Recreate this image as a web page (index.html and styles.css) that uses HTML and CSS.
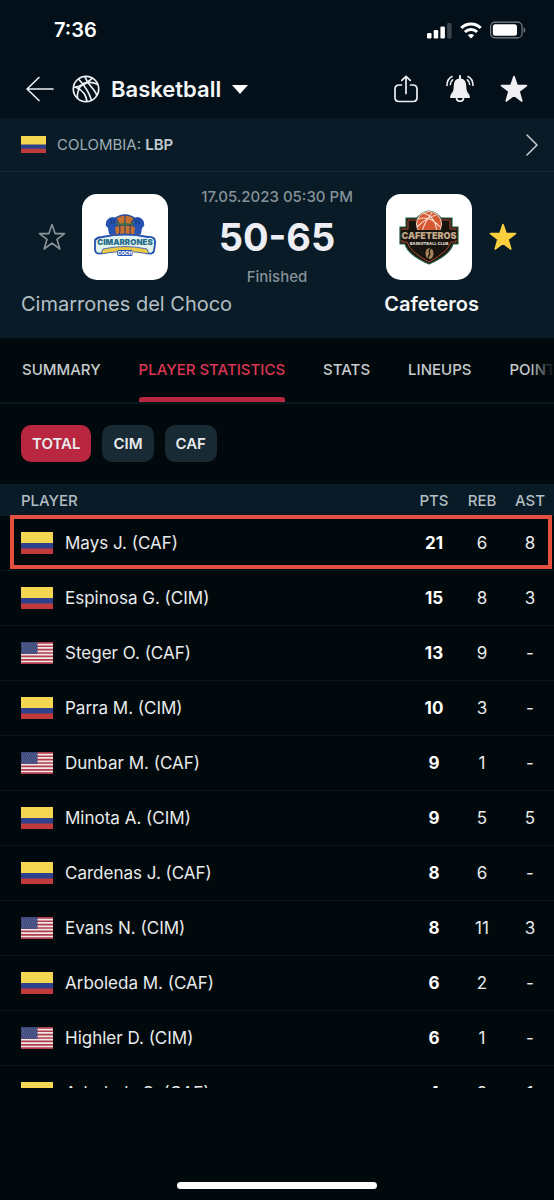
FILE: index.html
```
<!DOCTYPE html>
<html lang="en">
<head>
  <meta charset="utf-8">
  <meta name="viewport" content="width=device-width, initial-scale=1">
  <title>Cimarrones del Choco - Cafeteros</title>
  <link rel="stylesheet" href="styles.css">
</head>
<body>
<svg class="defs" aria-hidden="true">
  <symbol id="col" viewBox="0 0 32 22" preserveAspectRatio="none">
    <rect width="32" height="22" fill="#f5d653"/>
    <rect y="11" width="32" height="6" fill="#2d418c"/>
    <rect y="16.5" width="32" height="5.5" fill="#c13a3c"/>
  </symbol>
  <symbol id="usa" viewBox="0 0 32 22" preserveAspectRatio="none">
    <rect width="32" height="22" fill="#f1e6e8"/>
    <path d="M0 .85h32M0 4.25h32M0 7.6h32M0 11h32M0 14.4h32M0 17.8h32M0 21.15h32" stroke="#b03d4b" stroke-width="1.7"/>
    <rect width="16.5" height="11.8" fill="#3b4678"/>
    <path d="M1 2h15M2 4h14M1 6h15M2 8h14M1 10h15" stroke="#8d95b8" stroke-width=".8" stroke-dasharray="1 1.4"/>
  </symbol>
  <symbol id="star" viewBox="0 0 28 28">
    <path d="M14 1.500l3.100 9.100h9.400l-7.500 5.700 2.800 9.700-7.800-5.800L6.200 26 9 16.300 1.500 10.600h9.400z" stroke-width="1.600" stroke-linejoin="round"/>
  </symbol>
</svg>

<div class="status">
  <span class="time">7:36</span>
  <svg width="25" height="17" viewBox="0 0 25 17" fill="#fff">
    <rect y="11" width="4.500" height="5.500" rx="1.200"/>
    <rect x="6.700" y="8" width="4.500" height="8.500" rx="1.200"/>
    <rect x="13.400" y="4.500" width="4.500" height="12" rx="1.200"/>
    <rect x="20.100" y="1" width="4.500" height="15.500" rx="1.200" opacity=".22"/>
  </svg>
  <svg width="22" height="17" viewBox="0 0 22 17" fill="none" stroke="#fff" stroke-width="3">
    <path d="M1.300 6a13.800 13.800 0 0 1 19.400 0"/>
    <path d="M4.900 10a8.700 8.700 0 0 1 12.200 0"/>
    <path d="M11 16.500l-3.200-3.300a4.600 4.600 0 0 1 6.400 0z" fill="#fff" stroke="none"/>
  </svg>
  <svg width="36" height="18" viewBox="0 0 36 18">
    <rect x=".6" y="1.100" width="31.500" height="15.800" rx="4.500" fill="none" stroke="#fff" stroke-width="1.100" opacity=".5"/>
    <rect x="2.800" y="3.300" width="24.200" height="11.400" rx="2.500" fill="#fff"/>
    <path d="M33.700 6.500c2 .6 2 4.400 0 5z" fill="#fff" opacity=".5"/>
  </svg>
</div>

<header class="header">
  <button type="button" class="icon" aria-label="Back">
    <svg width="28" height="28" viewBox="0 0 28 28" fill="none" stroke="#eef1f3" stroke-width="1.600" stroke-linecap="round" stroke-linejoin="round">
      <path d="M27 14H1M13 2.500L1 14l12 11.500"/>
    </svg>
  </button>
  <button type="button" class="sport">
    <svg width="28" height="28" viewBox="0 0 28 28" fill="none" stroke="#eef1f3" stroke-width="1.700">
      <circle cx="14" cy="14" r="12.700"/>
      <path d="M1.500 12.500C7 12 13 9.500 17 6c2-1.800 3-2.800 3.600-3.600"/>
      <path d="M11 8.500c5-1.700 10.500-1.300 14.800.9"/>
      <path d="M6.500 4C12 10 17.500 18 19.500 25.400"/>
      <path d="M13 1.400c1 4 3 6.600 6 10.100 3 3.400 5.200 6 5.800 9.200"/>
      <path d="M5.500 23.400c-.6-4 .5-9 4-14"/>
      <path d="M15 26.600c-.8-6.600-3.500-11-10.800-14.100"/>
    </svg>
    Basketball
    <svg width="16" height="9" viewBox="0 0 16 9"><path d="M0 0h16L8 9z" fill="#fff"/></svg>
  </button>
  <div class="actions">
    <button type="button" class="icon" aria-label="Share">
      <svg width="28" height="28" viewBox="0 0 28 28" fill="none" stroke="#f0f0f2" stroke-width="1.700" stroke-linecap="round" stroke-linejoin="round">
        <path d="M9.500 10H7.200Q3 10 3 14.200v8.300Q3 26.500 7.200 26.500h13.600q4.200 0 4.200-4v-8.300Q25 10 20.800 10h-2.300"/>
        <path d="M14 18.500V1.500M9.800 5.300L14 1.300l4.200 4"/>
      </svg>
    </button>
    <button type="button" class="icon" aria-label="Notifications">
      <svg width="28" height="28" viewBox="0 0 28 28" fill="none" stroke="#f0f0f2" stroke-width="1.600" stroke-linecap="round">
        <path d="M14 1v3" stroke-width="2"/>
        <path d="M14 3.500c4.300 0 6 3.200 6.200 7 .2 5 .8 6.500 3 9l.8 2.500q0 1-1 1H5q-1 0-1-1l.8-2.500c2.200-2.500 2.800-4 3-9 .2-3.800 1.900-7 6.200-7z" fill="#f0f0f2" stroke="none"/>
        <path d="M10.500 23.500c.6 3.600 6.400 3.600 7 0"/>
        <path d="M1 10.500C1 6.300 3 3 6 1.500M4.300 9.500c.1-2 .9-3.700 2.300-4.700M27 10.500c0-4.200-2-7.500-5-9M23.700 9.500c-.1-2-.9-3.700-2.300-4.700"/>
      </svg>
    </button>
    <button type="button" class="icon" aria-label="Favourite">
      <svg class="star-white" width="28" height="28"><use href="#star"/></svg>
    </button>
  </div>
</header>

<a class="league" href="#">
  <svg width="25" height="17"><use href="#col"/></svg>
  <span>COLOMBIA: <b>LBP</b></span>
  <svg class="chevron" width="12" height="22" viewBox="0 0 12 22" fill="none" stroke="#c8d0d4" stroke-width="1.500" stroke-linecap="round" stroke-linejoin="round"><path d="M1 1l10 10L1 21"/></svg>
</a>

<section class="match">
  <div class="score-row">
    <button type="button" class="icon" aria-label="Follow Cimarrones del Choco">
      <svg class="star-line" width="28" height="28"><use href="#star"/></svg>
    </button>
    <div class="logo">
      <svg width="86" height="86" viewBox="0 0 86 86">
        <circle cx="43" cy="36" r="15" fill="#c8702f" stroke="#2a4da0" stroke-width="1.500"/>
        <path d="M43 21v22M28 34q15-6 30 0M34 24q6 8 3 18M52 24q-6 8-3 18" fill="none" stroke="#273a73"/>
        <path d="M25 26q4-5 9-2l2 6-3 4 1 6h-7l-1-6q-4-3-1-8zM61 26q-4-5-9-2l-2 6 3 4-1 6h7l1-6q4-3 1-8z" fill="#2753b3"/>
        <path d="M29 25v5M32 25v5M57 25v5M54 25v5" stroke="#173579"/>
        <path d="M34 29l5 2M52 29l-5 2M43 27v7M39 30h8" stroke="#31724a" stroke-width="1.400"/>
        <path d="M13 46q3-3 7-3 23-5 46 0 8-1 7 7l-1 7q-2 4-6 2-23-6-46 0-6 2-7-3z" fill="#e4f3ec" stroke="#2450b2" stroke-width="1.800" stroke-linejoin="round"/>
        <path d="M21 55q22-5 44 0l2 5q-24-5-48 0z" fill="#ecc943" stroke="#2450b2" stroke-width=".8"/>
        <text class="crest cim" x="43" y="51" text-anchor="middle">CIMARRONES</text>
        <rect x="35" y="56" width="16" height="6" rx="2" fill="#2450b2"/>
        <text class="crest coch" x="43" y="61" text-anchor="middle">COCH</text>
      </svg>
    </div>
    <div class="result">
      <div class="small">17.05.2023 05:30 PM</div>
      <div class="score">50-65</div>
      <div class="small">Finished</div>
    </div>
    <div class="logo">
      <svg width="86" height="86" viewBox="0 0 86 86">
        <path d="M20 24h11q12-14 24 0h11v9h6v17h-5q-3 11-24 20Q22 61 19 50h-5V33h6z" fill="#17130f" stroke="#285f42" stroke-width="1.200"/>
        <path d="M22 26h42v9h6v13h-5q-3 10-22 20Q24 58 21 48h-5V35h6z" fill="none" stroke="#b24b32"/>
        <circle cx="43" cy="30" r="12.500" fill="#d75932" stroke="#f5ddd0"/>
        <path d="M32 25q12-4 22 8M37 19q12 3 14 18M31 33q9-9 19-12M36 38q2-9 10-19" fill="none" stroke="#f5ddd0" stroke-width="1.100"/>
        <path d="M15 36h56v10H15z" fill="#17130f"/>
        <path d="M24 46h38l-2 6H26z" fill="#17130f"/>
        <text class="crest caf" x="43" y="45" text-anchor="middle">CAFETEROS</text>
        <text class="crest club" x="43" y="51" text-anchor="middle">BASKETBALL CLUB</text>
        <ellipse cx="43.500" cy="59.500" rx="4" ry="5.500" fill="#a5835b"/>
        <path d="M45 54q-3 3-1 6-2 2-2 5" fill="none" stroke="#17130f" stroke-width="1.200"/>
      </svg>
    </div>
    <button type="button" class="icon" aria-label="Unfollow Cafeteros">
      <svg class="star-gold" width="28" height="28"><use href="#star"/></svg>
    </button>
  </div>
  <div class="names">
    <span>Cimarrones del Choco</span>
    <strong>Cafeteros</strong>
  </div>
</section>

<nav class="tabs">
  <a href="#">SUMMARY</a>
  <a href="#" class="active">PLAYER STATISTICS</a>
  <a href="#">STATS</a>
  <a href="#">LINEUPS</a>
  <a href="#">POINT BY POINT</a>
</nav>

<div class="filters">
  <button type="button" class="chip selected">TOTAL</button>
  <button type="button" class="chip">CIM</button>
  <button type="button" class="chip">CAF</button>
</div>

<main class="list">
  <table class="players">
    <thead>
      <tr><th class="name">PLAYER</th><th>PTS</th><th>REB</th><th>AST</th></tr>
    </thead>
    <tbody>
      <tr class="marked"><td class="name"><div class="player"><svg class="flag"><use href="#col"/></svg>Mays J. (CAF)</div></td><td class="pts">21</td><td>6</td><td>8</td></tr>
      <tr><td class="name"><div class="player"><svg class="flag"><use href="#col"/></svg>Espinosa G. (CIM)</div></td><td class="pts">15</td><td>8</td><td>3</td></tr>
      <tr><td class="name"><div class="player"><svg class="flag"><use href="#usa"/></svg>Steger O. (CAF)</div></td><td class="pts">13</td><td>9</td><td>-</td></tr>
      <tr><td class="name"><div class="player"><svg class="flag"><use href="#col"/></svg>Parra M. (CIM)</div></td><td class="pts">10</td><td>3</td><td>-</td></tr>
      <tr><td class="name"><div class="player"><svg class="flag"><use href="#usa"/></svg>Dunbar M. (CAF)</div></td><td class="pts">9</td><td>1</td><td>-</td></tr>
      <tr><td class="name"><div class="player"><svg class="flag"><use href="#col"/></svg>Minota A. (CIM)</div></td><td class="pts">9</td><td>5</td><td>5</td></tr>
      <tr><td class="name"><div class="player"><svg class="flag"><use href="#col"/></svg>Cardenas J. (CAF)</div></td><td class="pts">8</td><td>6</td><td>-</td></tr>
      <tr><td class="name"><div class="player"><svg class="flag"><use href="#usa"/></svg>Evans N. (CIM)</div></td><td class="pts">8</td><td>11</td><td>3</td></tr>
      <tr><td class="name"><div class="player"><svg class="flag"><use href="#col"/></svg>Arboleda M. (CAF)</div></td><td class="pts">6</td><td>2</td><td>-</td></tr>
      <tr><td class="name"><div class="player"><svg class="flag"><use href="#usa"/></svg>Highler D. (CIM)</div></td><td class="pts">6</td><td>1</td><td>-</td></tr>
      <tr><td class="name"><div class="player"><svg class="flag"><use href="#col"/></svg>Arboleda S. (CAF)</div></td><td class="pts">4</td><td>2</td><td>1</td></tr>
    </tbody>
  </table>
</main>

<footer class="bottom">
  <div class="home"></div>
</footer>
</body>
</html>
```

FILE: styles.css
```
* {
  box-sizing: border-box;
}

body {
  margin: 0;
  height: 100vh;
  display: flex;
  flex-direction: column;
  overflow: hidden;
  background: #02090c;
  color: #e8ebed;
  font-family: Inter, "Liberation Sans", sans-serif;
  font-size: 17px;
}

svg {
  display: block;
  flex: none;
}

button {
  border: 0;
  padding: 0;
  background: none;
  color: inherit;
  font: inherit;
  cursor: pointer;
}

a {
  color: inherit;
  text-decoration: none;
}

.defs {
  width: 0;
  height: 0;
  position: absolute;
}

.status {
  display: flex;
  align-items: center;
  gap: 8px;
  height: 60px;
  flex: none;
  padding: 0 28px 0 54px;
  background: #03101a;
}

.time {
  margin-right: auto;
  font-size: 20px;
  font-weight: 600;
  color: #fff;
}

.header {
  display: flex;
  align-items: center;
  height: 58px;
  flex: none;
  padding: 0 26px;
  background: #03101a;
}

.sport {
  display: flex;
  align-items: center;
  gap: 11px;
  margin-left: 18px;
  font-size: 22px;
  font-weight: 600;
  color: #f4f6f7;
}

.actions {
  display: flex;
  gap: 26px;
  margin-left: auto;
}

.league {
  display: flex;
  align-items: center;
  gap: 11px;
  height: 54px;
  flex: none;
  padding: 0 16px 0 21px;
  background: #081b26;
  border-bottom: 1px solid #122832;
  color: #9fadb4;
  font-size: 15px;
}

.league b {
  font-weight: 600;
  color: #c0cad0;
}

.chevron {
  margin-left: auto;
}

.match {
  flex: none;
  padding: 15px 21px 22px;
  background: #081b26;
}

.score-row {
  display: grid;
  grid-template-columns: 61px 86px 1fr 86px 61px;
  align-items: center;
  justify-items: center;
}

.logo {
  border-radius: 15px;
  background: #fff;
}

.star-white {
  fill: #f0f0f2;
  stroke: #f0f0f2;
}

.star-line {
  fill: none;
  stroke: #8c9499;
}

.star-gold {
  fill: #fccf3e;
  stroke: #fccf3e;
}

.result {
  text-align: center;
  white-space: nowrap;
}

.small {
  color: #879198;
  font-size: 15px;
  font-weight: 500;
  line-height: 20px;
}

.score {
  color: #eceef3;
  font-size: 38px;
  font-weight: 700;
  line-height: 60px;
}

.names {
  display: grid;
  grid-template-columns: 1fr 1fr;
  column-gap: 98px;
  margin-top: 5px;
  text-align: center;
  white-space: nowrap;
  font-size: 20px;
  line-height: 24px;
  color: #b4c0c6;
}

.names strong {
  font-weight: 600;
  color: #f4f6f7;
}

.crest {
  font-family: Inter, sans-serif;
  font-weight: 900;
}

.cim {
  font-size: 8px;
  fill: #286d8c;
}

.coch {
  font-size: 5px;
  fill: #fff;
}

.caf {
  font-size: 9px;
  fill: #c4a98b;
}

.club {
  font-size: 4px;
  fill: #d9d0c4;
}

.tabs {
  position: relative;
  display: flex;
  gap: 38px;
  height: 66px;
  flex: none;
  padding-left: 22px;
  overflow: hidden;
  white-space: nowrap;
  border-bottom: 2px solid #08161d;
  font-size: 15px;
  font-weight: 500;
  line-height: 64px;
  color: #c6cbce;
}

/* fades out the tab that runs off the edge */
.tabs::after {
  content: "";
  position: absolute;
  top: 0;
  right: 0;
  bottom: 0;
  width: 24px;
  background: linear-gradient(to right, transparent, #02090c);
}

.tabs .active {
  position: relative;
  color: #dc3554;
}

.tabs .active::after {
  content: "";
  position: absolute;
  left: 0;
  right: 0;
  bottom: 0;
  height: 5px;
  border-radius: 3px 3px 0 0;
  background: #b8273f;
}

.filters {
  display: flex;
  gap: 11px;
  flex: none;
  padding: 21px 21px 22px;
}

.chip {
  height: 37px;
  padding: 0 11px;
  border-radius: 10px;
  background: #182a34;
  color: #e8ebed;
  font-size: 15px;
  font-weight: 600;
}

.chip.selected {
  background: #b8273f;
}

.list {
  flex: 1;
  min-height: 0;
  overflow: hidden;
}

.players {
  width: 100%;
  table-layout: fixed;
  border-collapse: separate;
  border-spacing: 0;
}

.players th,
.players td {
  width: 48px;
  padding: 0;
  text-align: center;
}

.players .name {
  width: auto;
  padding-left: 21px;
  text-align: left;
}

.players th {
  height: 32px;
  background: #081b26;
  color: #b3bdc2;
  font-size: 15px;
  font-weight: 500;
}

.players td {
  height: 55px;
  border-bottom: 1px solid #071821;
}

.players .pts {
  font-weight: 700;
  color: #fff;
}

.player {
  display: flex;
  align-items: center;
  gap: 12px;
  white-space: nowrap;
}

.flag {
  width: 32px;
  height: 22px;
}

.marked {
  position: relative;
}

/* red frame round the picked player */
.marked .player::after {
  content: "";
  position: absolute;
  top: -1px;
  right: 2px;
  bottom: 2px;
  left: 10px;
  border: 4px solid #e54f40;
}

.bottom {
  display: flex;
  align-items: flex-end;
  justify-content: center;
  height: 112px;
  flex: none;
  padding-bottom: 11px;
}

.home {
  width: 36%;
  height: 7px;
  border-radius: 4px;
  background: #fff;
}
```
